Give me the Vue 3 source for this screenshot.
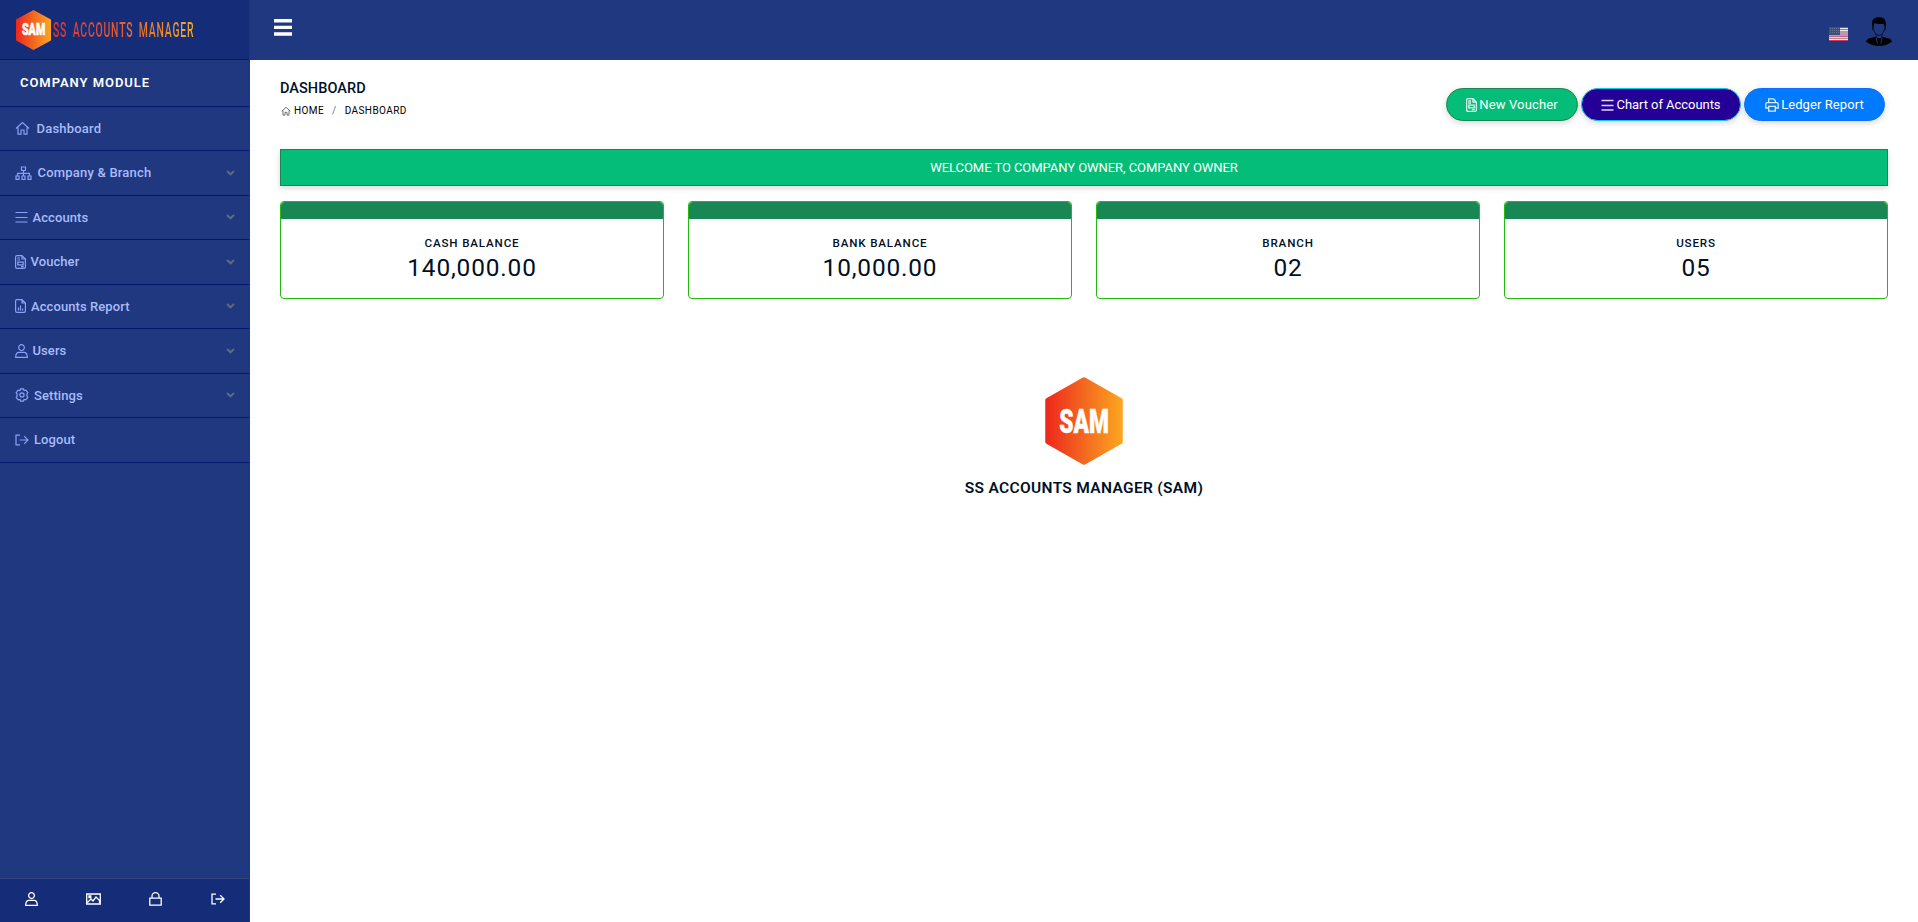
<script setup>
const navItems = [
  { id: 'dashboard', label: 'Dashboard', icon: 'home', iconWidth: 15, gap: 7 },
  { id: 'company', label: 'Company & Branch', icon: 'sitemap', iconWidth: 17, gap: 6, sub: true },
  { id: 'accounts', label: 'Accounts', icon: 'bars', iconWidth: 13, gap: 5, sub: true },
  { id: 'voucher', label: 'Voucher', icon: 'invoice', iconWidth: 11, gap: 5, sub: true },
  { id: 'report', label: 'Accounts Report', icon: 'chart', iconWidth: 11, gap: 5.5, sub: true },
  { id: 'users', label: 'Users', icon: 'user', iconWidth: 13, gap: 5, sub: true },
  { id: 'settings', label: 'Settings', icon: 'gear', iconWidth: 14, gap: 5.5, sub: true },
  { id: 'logout', label: 'Logout', icon: 'logout', iconWidth: 14, gap: 5.5 },
]

const icons = {
  home: 'M1 7.5 7.5 1.5 14 7.5M3 6.5V13.2H6V9H9V13.2H12V6.5',
  sitemap: 'M6.5 1H10.5V4.5H6.5ZM8.5 4.5V9.5M2.5 9.5V7.3H14.5V9.5M1 10H4V13.3H1ZM7 10H10V13.3H7ZM13 10H16V13.3H13Z',
  bars: 'M.5 2.5H12.5M.5 7.5H12.5M.5 12H12.5',
  invoice: 'M.6 2Q.6.6 2 .6H7L10.4 4V12Q10.4 13.4 9 13.4H2Q.6 13.4.6 12ZM7 .6V4H10.4M2.3 3H5M2.3 5H5M2.8 7.2H8.2V9.8H2.8ZM6 11.7H8.8',
  chart: 'M.6 2Q.6.6 2 .6H7L10.4 4V12Q10.4 13.4 9 13.4H2Q.6 13.4.6 12ZM7 .6V4H10.4M3.5 8.5V11.5M5.5 6.5V11.5M7.6 9.5V11.5',
  user: 'M6.5.7A2.9 2.9 0 1 1 6.5 6.5A2.9 2.9 0 1 1 6.5.7ZM3.5 8.3H9.5Q12.3 8.8 12.3 13.3H.7Q.7 8.8 3.5 8.3Z',
  gear: 'M5.5.8H8.5L9 2.6 10.9 2.2 12.8 4.6 11.9 6.2V7.8L12.8 9.4 10.9 11.8 9 11.4 8.5 13.2H5.5L5 11.4 3.1 11.8 1.2 9.4 2.1 7.8V6.2L1.2 4.6 3.1 2.2 5 2.6ZM7 4.9A2.1 2.1 0 1 1 7 9.1A2.1 2.1 0 1 1 7 4.9',
  logout: 'M5 2.2H1V11.8H5M4.5 7H13M9.2 3.2 13 7 9.2 10.8',
}

const stats = [
  { label: 'CASH BALANCE', value: '140,000.00' },
  { label: 'BANK BALANCE', value: '10,000.00' },
  { label: 'BRANCH', value: '02' },
  { label: 'USERS', value: '05' },
]
</script>

<template>
  <div class="shell">
    <aside class="sidebar">
      <div class="brand">
        <svg width="36" height="42" viewBox="0 0 36 42">
          <defs>
            <linearGradient id="brandHex" x1="0" x2="1" y1="0" y2="0">
              <stop offset="0" stop-color="#ee2a1c" /><stop offset=".5" stop-color="#f3681f" /><stop offset="1" stop-color="#fca31f" />
            </linearGradient>
          </defs>
          <path d="M17.5 2 34 11.2V30.8L17.5 40 1 30.8V11.2Z" fill="url(#brandHex)" stroke="url(#brandHex)" stroke-width="2" stroke-linejoin="round" />
          <text class="hex-text" transform="translate(17.6 26.4) scale(.68 1)" text-anchor="middle" font-size="15.8">SAM</text>
        </svg>
        <div class="wordmark">SS ACCOUNTS MANAGER</div>
      </div>
      <div class="module">COMPANY MODULE</div>
      <nav>
        <a v-for="item in navItems" :key="item.id" class="nav-item" :class="item.id">
          <svg class="nav-icon" :width="item.iconWidth" height="14" :style="{ marginRight: item.gap + 'px' }"><path :d="icons[item.icon]" /></svg>
          <span>{{ item.label }}</span>
          <svg v-if="item.sub" class="chevron" width="9" height="6" viewBox="0 0 9 6"><path d="M1 1 4.5 4.3 8 1" /></svg>
        </a>
      </nav>
      <div class="sidebar-footer">
        <span><svg width="13" height="14"><path :d="icons.user" /></svg></span>
        <span><svg width="15" height="12"><path d="M.7 1H14.3V11H.7ZM1.5 9.5 5 6 7 8 10 4 13.5 7.5V10M3 3H4.8V4.5H3Z" /></svg></span>
        <span><svg width="13" height="14"><path d="M.8 6.2H12.2V13.2H.8ZM3 6.2V4.2A3.5 3.5 0 0 1 10 4.2V6.2" /></svg></span>
        <span><svg width="14" height="14"><path :d="icons.logout" /></svg></span>
      </div>
    </aside>

    <div class="main">
      <header class="topbar">
        <svg class="burger" width="18" height="17" viewBox="0 0 18 17"><path d="M0 1.8H18M0 8.4H18M0 15H18" /></svg>
        <div class="topbar-right">
          <svg class="flag" width="19" height="14" viewBox="0 0 19 14">
            <rect width="19" height="14" fill="#f0e9f1" />
            <path d="M0 .5H19M0 13.5H19" stroke="#c83b4c" />
            <path d="M11 2.5H19M0 9.5H19M0 11.3H19" stroke="#bd6a88" />
            <rect x="11" y="4" width="8" height="5" fill="#b898b5" />
            <path d="M0 8.5H19" stroke="#b898b5" />
            <rect width="11" height="8" fill="#3c4f7d" />
            <path d="M1 1.5H11M1 3.5H11M1 5.5H11" stroke="#66779a" stroke-width=".8" stroke-dasharray="1 1" />
          </svg>
          <svg class="avatar" width="26" height="29" viewBox="0 0 26 29">
            <path d="M6.5 10C5 4 7 .2 12.5.2 18.5-.2 21 4 19.5 10L18.3 8.2 17.5 6.8Q12 7.4 8.3 6.2L7.5 9Z" />
            <path d="M7.2 7.5V11.5Q8.3 15.6 10.2 17.4Q13 19.4 15.8 17.4Q17.7 15.6 18.8 11.5V7.5M6.6 9.5V12.5L8 13M19.4 9.5V12.5L18 13M10 17.4V20M16 17.4V20" fill="none" stroke="#060914" stroke-width=".8" />
            <path d="M9.5 19.8 2.6 21.6Q.4 22.8 0 24.8Q6 29 13 29Q20 29 26 24.8Q25.6 22.8 23.4 21.6L16.5 19.8 13 21.5Z" />
            <path d="M10 20.5 11.4 26.5M16 20.5 14.6 26.5" stroke="#2c417f" stroke-width=".8" />
          </svg>
        </div>
      </header>

      <main class="content">
        <div class="page-head">
          <div>
            <h1>DASHBOARD</h1>
            <div class="crumbs">
              <svg width="10" height="10" viewBox="0 0 15 14"><path :d="icons.home" /></svg>
              <span class="crumb-home">HOME</span><span class="slash">/</span><span>DASHBOARD</span>
            </div>
          </div>
          <div class="actions">
            <a class="btn btn-voucher"><svg width="11" height="14"><path :d="icons.invoice" /></svg><span>New Voucher</span></a>
            <a class="btn btn-chart"><svg width="13" height="14"><path :d="icons.bars" /></svg><span>Chart of Accounts</span></a>
            <a class="btn btn-ledger"><svg width="14" height="14"><path d="M3.7 4.5V.8H8.5L10.3 2.6V4.5M3.5 10H.8V6Q.8 4.7 2 4.7H12Q13.2 4.7 13.2 6V10H10.5M3.7 8.3H10.3V13.2H3.7Z" /></svg><span>Ledger Report</span></a>
          </div>
        </div>

        <div class="welcome"><span>WELCOME TO COMPANY OWNER, COMPANY OWNER</span></div>

        <section class="stats">
          <article v-for="stat in stats" :key="stat.label" class="card">
            <div class="card-head"></div>
            <div class="card-label">{{ stat.label }}</div>
            <div class="card-value">{{ stat.value }}</div>
          </article>
        </section>

        <section class="about">
          <svg width="78" height="88" viewBox="0 0 78 88">
            <path d="M39 2.5 75.5 23.3V64.7L39 85.5 2.5 64.7V23.3Z" fill="url(#brandHex)" stroke="url(#brandHex)" stroke-width="4.5" stroke-linejoin="round" />
            <text class="hex-text" transform="translate(39 55.7) scale(.69 1)" text-anchor="middle" font-size="33">SAM</text>
          </svg>
          <h2>SS ACCOUNTS MANAGER (SAM)</h2>
        </section>
      </main>
    </div>
  </div>
</template>

<style>
body { background: #fff; overflow: hidden; }
</style>

<style scoped>
.shell { display: flex; height: 922px; font-family: Roboto, "Noto Sans", sans-serif; color: #001026; }
.shell * { box-sizing: border-box; }
svg { display: block; flex: none; }
.sidebar { width: 250px; flex: none; display: flex; flex-direction: column; background: #1f3880; border-right: 1px solid #1c3580; }
.brand { height: 60px; display: flex; padding: 9px 0 0 16px; background: #152d78; border-bottom: 1px solid #001a6b; }
.hex-text { fill: #fff; stroke: #fff; stroke-width: .5; font-weight: 900; }
.wordmark { width: max-content; height: 24px; margin: 9px 0 0 1px; font-size: 20.4px; line-height: 24px; font-weight: 500; letter-spacing: 1.6px; word-spacing: 4px; white-space: nowrap; color: transparent; background: linear-gradient(90deg, #e82e2a, #ea602a 50%, #f2aa21); -webkit-background-clip: text; background-clip: text; transform: scaleX(.51); transform-origin: 0 0; }
.module { height: 46.5px; flex: none; padding-left: 20px; border-bottom: 1px solid #001a6b; color: #fff; font-size: 13px; font-weight: 600; letter-spacing: .95px; line-height: 45px; }
.nav-item { display: flex; align-items: center; height: 44.5px; padding: 0 14.5px .4px; border-bottom: 1px solid #001a6b; color: #a9bbf8; font-size: 13px; font-weight: 500; letter-spacing: .08px; }
.dashboard, .company { letter-spacing: .2px; }
.nav-icon { fill: none; stroke: #8ba0f4; stroke-width: 1.2; }
.chevron { margin-left: auto; fill: none; stroke: #5b6d7c; stroke-width: 2; }
.sidebar-footer { margin-top: auto; height: 44px; display: grid; grid-template-columns: repeat(4, 1fr); border-top: 1px solid #33457f; background: #152d78; }
.sidebar-footer span { display: flex; align-items: center; justify-content: center; padding-bottom: 4px; }
.sidebar-footer svg { fill: none; stroke: #fff; stroke-width: 1.3; }
.main { flex: 1; min-width: 0; }
.topbar { height: 60px; display: flex; justify-content: space-between; padding: 0 26px 0 24px; background: #1f3880; }
.burger { margin-top: 19px; fill: none; stroke: #fff; stroke-width: 3.4; }
.topbar-right { display: flex; gap: 18px; }
.flag { margin-top: 27px; }
.avatar { margin-top: 17px; }
.content { padding: 20px 30px 0; }
.page-head { display: flex; justify-content: space-between; height: 69px; }
h1 { margin: 0; font-size: 14.5px; line-height: 17px; font-weight: 500; letter-spacing: .05px; }
.crumbs { display: flex; align-items: center; margin-top: 7px; font-size: 10px; line-height: 13px; font-weight: 400; letter-spacing: .42px; color: #000; }
.crumbs svg { margin: 0 3px 0 1px; fill: none; stroke: #6f7078; stroke-width: 1.5; }
.slash { margin: 0 8px; color: #6c757d; }
.actions { display: flex; gap: 3px; margin: 8px 3px 0 0; }
.btn { height: 33px; display: flex; align-items: center; justify-content: center; border: 1px solid; border-radius: 17px; color: #fff; font-size: 13px; letter-spacing: .08px; box-shadow: 0 2px 6px rgba(0, 0, 0, .16); }
.btn svg { margin-right: 2px; fill: none; stroke: currentColor; stroke-width: 1.3; opacity: .85; }
.btn-voucher { width: 132px; background: #04bd78; border-color: #198754; letter-spacing: .14px; }
.btn-chart { width: 160px; background: #250096; border-color: #0dcaf0; letter-spacing: -.05px; }
.btn-ledger { width: 141px; background: #007bff; border-color: #0d6efd; }
.welcome { height: 37px; border: 1px solid #198754; background: #04bd78; box-shadow: 0 2px 6px rgba(0, 0, 0, .16); color: #fff; font-size: 13px; letter-spacing: -.06px; line-height: 35px; text-align: center; }
.stats { display: grid; grid-template-columns: repeat(4, 1fr); gap: 24px; margin-top: 15px; }
.card { height: 98px; border: 1px solid #24b90f; border-radius: 4px; text-align: center; }
.card-head { height: 17px; background: #198754; border-radius: 4px 4px 0 0; }
.card-label { margin-top: 16px; font-size: 11.6px; line-height: 16px; font-weight: 500; letter-spacing: .85px; }
.card-value { margin-top: 3px; font-size: 24.4px; line-height: 28px; letter-spacing: .85px; }
.about { display: flex; flex-direction: column; align-items: center; margin-top: 78px; }
h2 { margin: 13px 0 0; font-size: 15.5px; line-height: 20px; font-weight: 600; letter-spacing: .33px; }
</style>
